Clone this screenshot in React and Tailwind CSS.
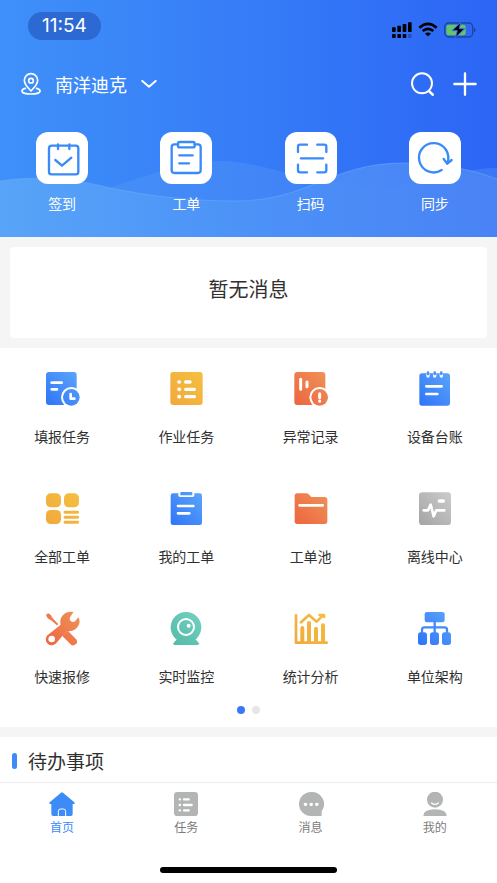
import React, { useState } from 'react';

const BLUE = 'url(#grad-blue)';
const YELLOW = 'url(#grad-yellow)';
const ORANGE = 'url(#grad-orange)';
const GREEN = 'url(#grad-green)';
const GRAY = 'url(#grad-gray)';

// shared gradients, running from bottom left to top right of each 108x108 icon
const Gradients = () => (
  <svg className="absolute size-0" aria-hidden="true">
    <defs>
      {[
        ['grad-blue', '#2f74f8', '#5ba5fb'],
        ['grad-yellow', '#f2a83b', '#f4bf41'],
        ['grad-orange', '#ed6540', '#ef9257'],
        ['grad-green', '#52b9a4', '#74d2c4'],
        ['grad-gray', '#a4a4a4', '#cbcbcb'],
      ].map(([id, from, to]) => (
        <linearGradient key={id} id={id} gradientUnits="userSpaceOnUse" x1="6" y1="102" x2="102" y2="6">
          <stop offset="0" stopColor={from} />
          <stop offset="1" stopColor={to} />
        </linearGradient>
      ))}
    </defs>
  </svg>
);

const White = ({ d, width = 8 }) => (
  <path d={d} fill="none" stroke="#fff" strokeWidth={width} strokeLinecap="round" strokeLinejoin="round" />
);

const modules = [
  {
    name: '填报任务',
    icon: (
      <>
        <rect x="6" y="3" width="92" height="99" rx="9" fill={BLUE} />
        <White d="M23 35H53M23 55H39" />
        <circle cx="82" cy="79" r="31" fill="#fff" />
        <circle cx="82" cy="79" r="25" fill={BLUE} />
        <White d="M80 69V83H91" />
      </>
    ),
  },
  {
    name: '作业任务',
    icon: (
      <>
        <rect x="7" y="3" width="97" height="99" rx="9" fill={YELLOW} />
        <White d="M33 33h1M33 55h1M33 77h1" width={11} />
        <White d="M53 33H66M53 55H79M53 77H79" width={10} />
      </>
    ),
  },
  {
    name: '异常记录',
    icon: (
      <>
        <rect x="4" y="3" width="93" height="99" rx="9" fill={ORANGE} />
        <White d="M23 25V55M42 33V47" width={9} />
        <circle cx="80" cy="79" r="31" fill="#fff" />
        <circle cx="80" cy="79" r="25" fill={ORANGE} />
        <White d="M80 68V80M80 90v1" width={9} />
      </>
    ),
  },
  {
    name: '设备台账',
    icon: (
      <>
        <rect x="7" y="7" width="92" height="97" rx="8" fill={BLUE} />
        <White d="M33 9V15M53 9V15M73 9V15" width={10} />
        <path d="M33 5V9M53 5V9M73 5V9" stroke="#4a92fa" strokeWidth="8" strokeLinecap="round" />
        <White d="M28 46H74M28 69H61" />
      </>
    ),
  },
  {
    name: '全部工单',
    icon: (
      <g fill={YELLOW}>
        <rect x="6" y="7" width="45" height="42" rx="14" />
        <rect x="60" y="7" width="45" height="42" rx="14" />
        <rect x="6" y="57" width="45" height="42" rx="14" />
        <rect x="59" y="59" width="46" height="9" rx="4" />
        <rect x="59" y="74" width="46" height="9" rx="4" />
        <rect x="59" y="89" width="46" height="9" rx="4" />
      </g>
    ),
  },
  {
    name: '我的工单',
    icon: (
      <>
        <rect x="8" y="7" width="94" height="95" rx="7" fill={BLUE} />
        <path d="M31 6H79V13Q79 18 74 18H36Q31 18 31 13Z" fill="#fff" />
        <rect x="37" y="3" width="36" height="10" rx="2" fill={BLUE} />
        <White d="M30 45H76M30 67H64" />
      </>
    ),
  },
  {
    name: '工单池',
    icon: (
      <>
        <path d="M13 7H40Q44 7 47 10L55 18H95Q103 18 103 26V91Q103 99 95 99H13Q5 99 5 91V15Q5 7 13 7Z" fill={ORANGE} />
        <White d="M20 43H89" />
      </>
    ),
  },
  {
    name: '离线中心',
    icon: (
      <>
        <rect x="6" y="4" width="96" height="98" rx="10" fill={GRAY} />
        <White d="M20 58H33L41 41L50 76L58 58H82" />
        <White d="M67 30H79" width={10} />
      </>
    ),
  },
  {
    name: '快速报修',
    icon: (
      <>
        <path d="M6 12L12 7Q15 7 21 13L26 22L42 38Q43 42 39 43L21 28L13 23Q6 16 6 12Z" fill={ORANGE} />
        <path d="M72 60L98 86Q102 92 97 98Q91 104 83 103L57 77Q54 74 57 71L68 60Q70 58 72 60Z" fill={ORANGE} />
        <path
          d="M87 5Q92 2 82 2A31 31 0 0 0 50 41L15 69A18 18 0 1 0 39 94L68 60Q92 64 104 43Q110 29 103 19L93 31Q87 36 80 30Q75 24 79 17Z"
          fill={ORANGE}
        />
        <circle cx="23" cy="84" r="10" fill="#fff" />
      </>
    ),
  },
  {
    name: '实时监控',
    icon: (
      <>
        <path d="M27 84H82L93 97Q94 102 89 102H20Q15 102 16 97Z" fill={GREEN} />
        <circle cx="54" cy="49" r="46" fill={GREEN} />
        <circle cx="54" cy="48" r="24" fill="none" stroke="#fff" strokeWidth="6" />
        <circle cx="62" cy="44" r="6" fill="#fff" />
      </>
    ),
  },
  {
    name: '统计分析',
    icon: (
      <g fill="none" stroke={YELLOW} strokeWidth="8" strokeLinecap="round" strokeLinejoin="round">
        <path d="M9 13V95H101" />
        <path d="M24 34L48 12L71 32L90 13M80 12H93V18" />
        <path d="M28 92V51M48 92V36M69 92V53M90 92V43" strokeWidth="12" />
      </g>
    ),
  },
  {
    name: '单位架构',
    icon: (
      <>
        <rect x="23" y="3" width="60" height="31" rx="7" fill={BLUE} />
        <path d="M53 32V66M15 68V56Q15 49 22 49H83Q90 49 90 56V68" fill="none" stroke="#4289f9" strokeWidth="7" />
        <rect x="3" y="64" width="27" height="38" rx="8" fill={BLUE} />
        <rect x="39" y="64" width="27" height="38" rx="8" fill={BLUE} />
        <rect x="75" y="64" width="27" height="38" rx="8" fill={BLUE} />
      </>
    ),
  },
];

const actions = [
  {
    name: '签到',
    icon: (
      <>
        <rect x="39" y="41" width="88" height="86" rx="8" />
        <path d="M66 37V51M100 37V51" />
        <path d="M58 84L78 101L106 77" />
      </>
    ),
  },
  {
    name: '工单',
    icon: (
      <>
        <path d="M54 37H43Q35 37 35 45V115Q35 123 43 123H114Q122 123 122 115V45Q122 37 114 37H104" />
        <rect x="54" y="30" width="50" height="16" rx="5" />
        <path d="M58 70H98M58 94H87" />
      </>
    ),
  },
  {
    name: '扫码',
    icon: (
      <>
        <path d="M39 60V44Q39 38 45 38H66M97 38H118Q124 38 124 44V60M124 98V115Q124 121 118 121H97M66 121H45Q39 121 39 115V98" />
        <path d="M48 79H114" />
      </>
    ),
  },
  {
    name: '同步',
    icon: (
      <>
        <path d="M98 114A44 44 0 1 1 115 93" />
        <path d="M104 81L115 95L128 84" />
      </>
    ),
  },
];

const tabs = [
  {
    name: '首页',
    icon: (
      <>
        <path d="M36 2Q39 -1 42 2L76 31Q79 35 74 36H71V66Q71 72 65 72H13Q7 72 7 66V36H4Q-1 35 2 31Z" fill="currentColor" />
        <path d="M28 73V58Q28 51 35 51H43Q50 51 50 58V73" fill="none" stroke="#fff" strokeWidth="3" />
      </>
    ),
  },
  {
    name: '任务',
    icon: (
      <>
        <rect x="3" y="0" width="72" height="72" rx="10" fill="currentColor" />
        <White d="M20 22h1M20 39h1M20 55h1" width={7} />
        <White d="M33 22H47M33 39H56M33 55H47" width={7} />
      </>
    ),
  },
  {
    name: '消息',
    icon: (
      <>
        <path d="M39 0A37 36 0 0 1 71 57V70Q71 72 69 72H39A36 36 0 0 1 39 0Z" fill="currentColor" />
        <White d="M22 37h1M39 37h1M56 37h1" width={10} />
      </>
    ),
  },
  {
    name: '我的',
    icon: (
      <>
        <circle cx="39" cy="23" r="24" fill="currentColor" />
        <White d="M29 33Q39 41 49 33" width={4} />
        <path d="M4 72Q4 52 39 52Q74 52 74 72Z" fill="currentColor" />
      </>
    ),
  },
];

const StatusBar = () => (
  <div className="flex items-end justify-between pl-7 pr-[21px]">
    <span className="flex h-7 items-center rounded-full bg-[#2d69d3] px-3.5 font-['Inter',sans-serif] text-[19px]">11:54</span>
    <div className="flex items-center gap-1.5 pb-0.5 text-black">
      <svg viewBox="0 0 60 48" className="h-4 w-5" fill="currentColor">
        <rect x="0" y="16" width="11" height="14" rx="2" />
        <rect x="16" y="11" width="11" height="19" rx="2" />
        <rect x="32" y="6" width="11" height="24" rx="2" />
        <rect x="48" y="1" width="11" height="29" rx="2" />
        <rect x="0" y="36" width="11" height="12" rx="2" />
        <rect x="16" y="36" width="11" height="12" rx="2" />
        <rect x="32" y="36" width="11" height="12" rx="2" />
        <rect x="48" y="36" width="11" height="12" rx="2" opacity="0.25" />
      </svg>
      <svg viewBox="0 0 60 48" className="h-4 w-5" fill="none" stroke="currentColor" strokeWidth="8">
        <path d="M4 17Q30 -6 56 17" />
        <path d="M14 27Q30 14 46 27" />
        <path d="M30 43L21 35Q30 28 39 35Z" fill="currentColor" stroke="none" />
      </svg>
      <svg viewBox="0 0 96 48" className="h-4 w-8">
        <rect x="2" y="3" width="84" height="42" rx="12" fill="none" stroke="#1c459f" strokeWidth="4" />
        <path d="M90 17Q95 19 95 24Q95 29 90 31Z" fill="#1c459f" />
        <rect x="7" y="8" width="58" height="32" rx="7" fill="#65c466" />
        <path d="M50 1L24 26H40L34 47L62 20H46Z" fill="#000" stroke="#2f6bf6" strokeWidth="3" />
      </svg>
    </div>
  </div>
);

const Header = () => (
  <header className="relative bg-linear-to-r from-[#3f90f9] via-[#367cf7] to-[#2c65f5] pt-3 pb-6 text-white">
    <svg viewBox="0 0 497 80" preserveAspectRatio="none" className="absolute inset-x-0 bottom-0 h-20 w-full" aria-hidden="true">
      <defs>
        <linearGradient id="wave">
          <stop offset="0" stopColor="#5aa6f8" />
          <stop offset="0.5" stopColor="#4d93f7" />
          <stop offset="1" stopColor="#4b84f5" />
        </linearGradient>
      </defs>
      <path d="M0 25C40 37 80 37 110 30C150 19 180 4 220 4C270 4 300 29 380 29C430 29 450 12 497 11V80H0Z" fill="#5a9af5" opacity="0.35" />
      <path d="M0 24C40 18 75 22 110 31C150 39 190 44 235 44C310 44 330 6 404 6C440 6 470 12 497 22V80H0Z" fill="url(#wave)" opacity="0.9" />
      <path d="M0 24C40 18 75 22 110 31C150 39 190 44 235 44C310 44 330 6 404 6C440 6 470 12 497 22" fill="none" stroke="#6fb0fa" strokeOpacity="0.5" />
    </svg>

    <div className="relative">
      <StatusBar />

      <div className="mt-7 flex h-8 items-center justify-between pr-5 pl-[21px]">
        <button className="flex items-center gap-3.5 text-lg">
          <svg viewBox="0 0 60 68" className="h-6 w-5" fill="none" stroke="currentColor" strokeWidth="5" strokeLinecap="round" strokeLinejoin="round">
            <path d="M30 55Q10 36 10 23A20 20 0 0 1 50 23Q50 36 30 55Z" />
            <circle cx="30" cy="24" r="7" />
            <path d="M13 47Q2 50 3 56Q6 64 30 64Q54 64 57 56Q58 50 47 47" />
          </svg>
          南洋迪克
          <svg viewBox="0 0 48 24" className="h-2 w-4" fill="none" stroke="currentColor" strokeWidth="6" strokeLinecap="round" strokeLinejoin="round">
            <path d="M4 3L24 20L44 3" />
          </svg>
        </button>
        <div className="flex items-center gap-[18px]">
          <button aria-label="搜索">
            <svg viewBox="0 0 72 72" className="size-6" fill="none" stroke="currentColor" strokeWidth="6" strokeLinecap="round">
              <circle cx="33" cy="34" r="30" />
              <path d="M55 58L65 68" strokeWidth="8" />
            </svg>
          </button>
          <button aria-label="添加">
            <svg viewBox="0 0 72 72" className="size-6" fill="none" stroke="currentColor" strokeWidth="7" strokeLinecap="round">
              <path d="M36 4V68M4 36H68" />
            </svg>
          </button>
        </div>
      </div>

      <div className="mt-8 grid grid-cols-4">
        {actions.map((action) => (
          <button key={action.name} className="flex flex-col items-center gap-[9px] text-sm">
            <span className="rounded-xl bg-white text-[#3a8bf8]">
              <svg viewBox="0 0 156 156" className="size-13" fill="none" stroke="currentColor" strokeWidth="7" strokeLinecap="round" strokeLinejoin="round">
                {action.icon}
              </svg>
            </span>
            {action.name}
          </button>
        ))}
      </div>
    </div>
  </header>
);

const App = () => {
  const [activeTab, setActiveTab] = useState('首页');

  return (
    <div className="flex min-h-screen flex-col bg-[#f5f5f5] font-['Noto_Sans_CJK_SC',sans-serif] text-[#303030]">
      <Gradients />
      <Header />

      <main className="flex flex-1 flex-col gap-2.5 pt-2.5">
        <section className="mx-2.5 rounded bg-white pt-[27px] pb-[34px] text-center text-xl/[30px]">暂无消息</section>

        <section className="bg-white pt-[23px] pb-[13px]">
          <div className="grid grid-cols-4 gap-y-[45px]">
            {modules.map((item) => (
              <button key={item.name} className="flex flex-col items-center gap-[19px] text-sm">
                <svg viewBox="0 0 108 108" className="size-9">{item.icon}</svg>
                {item.name}
              </button>
            ))}
          </div>
          <div className="mt-5 flex justify-center gap-[7px]">
            <span className="size-2 rounded-full bg-[#3b78f5]" />
            <span className="size-2 rounded-full bg-[#e6e6e6]" />
          </div>
        </section>

        <section className="flex flex-1 items-start bg-white px-3 pt-[9px] pb-1.5">
          <h2 className="flex items-center gap-[11px] text-[19px]/[30px]">
            <span className="h-4 w-[5px] rounded-full bg-[#3d8bf7]" />
            待办事项
          </h2>
        </section>
      </main>

      <nav className="sticky bottom-0 border-t border-[#ececec] bg-white pt-[9px] pb-2.5">
        <div className="grid grid-cols-4">
          {tabs.map((tab) => (
            <button
              key={tab.name}
              onClick={() => setActiveTab(tab.name)}
              className={`flex flex-col items-center gap-[3px] text-xs ${activeTab === tab.name ? 'text-[#3d8bf7]' : 'text-[#7b7b7b]'}`}
            >
              <svg viewBox="0 0 78 72" className={`h-6 w-[26px] ${activeTab === tab.name ? 'text-[#3d8bf7]' : 'text-[#b3b5b4]'}`}>
                {tab.icon}
              </svg>
              {tab.name}
            </button>
          ))}
        </div>
        <div className="mx-auto mt-8 h-1.5 w-[177px] rounded-full bg-black" />
      </nav>
    </div>
  );
};

export default App;
